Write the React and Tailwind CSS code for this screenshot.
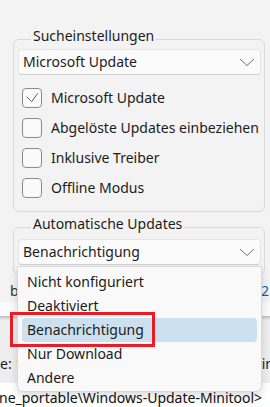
import React from "react";

const font = { fontFamily: '"Noto Sans", "Open Sans", sans-serif' };

function Chevron() {
  return (
    <svg width="16" height="9" viewBox="0 0 16 9" className="shrink-0">
      <polyline points="1,1 8,7.5 15,1" fill="none" stroke="#707070" strokeWidth="1" />
    </svg>
  );
}

function Combo({ value }) {
  return (
    <div className="ml-[4px] mr-[3px] h-[26px] flex items-center justify-between pl-[4px] pr-[5px] rounded-[4px] bg-[#fbfbfb] border border-[#e5e5e5] border-b-[#cfcfcf] text-[14px] text-[#1b1b1b]">
      <span className="leading-none">{value}</span>
      <Chevron />
    </div>
  );
}

function Check({ label, checked }) {
  return (
    <div className="flex items-center h-[20px] ml-[8px]">
      <div className="w-[20px] h-[20px] rounded-[4px] border border-[#8c8c8c] bg-[#fafafa] shrink-0">
        {checked && (
          <svg width="18" height="18" viewBox="0 0 18 18">
            <polyline points="3.7,7.7 8.7,12.7 14.7,4.3" fill="none" stroke="#5f5f5f" strokeWidth="1" />
          </svg>
        )}
      </div>
      <span className="ml-[9px] text-[14px] text-[#1b1b1b] leading-none whitespace-nowrap">{label}</span>
    </div>
  );
}

function Group({ title, children, className }) {
  return (
    <fieldset className={"ml-[13px] w-[252px] border border-[#dadada] rounded-[6px] " + className}>
      <legend className="ml-[17px] px-[2px] pb-[7px] text-[14px] leading-[16px] text-[#1b1b1b]">{title}</legend>
      {children}
    </fieldset>
  );
}

export default function App() {
  const items = ["Nicht konfiguriert", "Deaktiviert", "Benachrichtigung", "Nur Download", "Andere"];
  return (
    <div className="relative w-[270px] h-[407px] overflow-hidden bg-[#f3f3f3]" style={font}>
      <div className="h-[302px] flex flex-col pt-[28px]">
        <Group title="Sucheinstellungen" className="pb-[13px]">
          <div className="-mt-[2px]">
            <Combo value="Microsoft Update" />
          </div>
          <div className="mt-[13px] flex flex-col gap-[10px]">
            <Check label="Microsoft Update" checked />
            <Check label="Abgelöste Updates einbeziehen" />
            <Check label="Inklusive Treiber" />
            <Check label="Offline Modus" />
          </div>
        </Group>
        <Group title="Automatische Updates" className="mt-[4px] pb-[9px]">
          <div className="mt-[0px]">
            <Combo value="Benachrichtigung" />
          </div>
        </Group>
        <div className="flex justify-between items-center mt-[8px] px-[10px] pr-[1px] text-[14px] leading-[16px]">
          <span className="text-[#333]">b</span>
          <span className="text-[#0067c0]">2</span>
        </div>
      </div>
      <div className="h-[14px] bg-[#fbfbfb]" />
      <div className="h-[4px] bg-gradient-to-b from-[#bdbdbd] to-[#ececec]" />
      <div className="h-[63px] bg-[#eeeeee] flex items-end justify-between pb-[11px] text-[14px] leading-[16px]">
        <span>
          <span className="text-[#1b1b1b]">e: </span>
          <span className="text-[#c8a800]">1</span>
        </span>
        <span className="text-[#1b1b1b] -mr-[4px]">in</span>
      </div>
      <div className="h-[9px] bg-white" />
      <div className="h-[15px] bg-white overflow-hidden">
        <div className="-mt-[4px] -ml-[1px] text-[14px] leading-[20px] text-[#111] whitespace-nowrap">ne_portable\Windows-Update-Minitool&gt;</div>
      </div>

      <div className="absolute left-[17px] top-[266px] w-[245px] h-[126px] bg-[#f9f9f9] border border-[#d9d9d9] rounded-b-[6px] shadow-[0_4px_8px_rgba(0,0,0,0.14)] pt-[3px] px-[4px]">
        {items.map((t) => (
          <div
            key={t}
            className={
              "h-[24px] flex items-center pl-[5px] rounded-[4px] text-[14px] leading-none text-[#1b1b1b] " +
              (t === "Benachrichtigung" ? "bg-[#cce0f0]" : "")
            }
          >
            {t}
          </div>
        ))}
      </div>
      <div className="absolute left-[10px] top-[312px] w-[145px] h-[35px] border-[3px] border-[#ec1c24]" />
    </div>
  );
}
